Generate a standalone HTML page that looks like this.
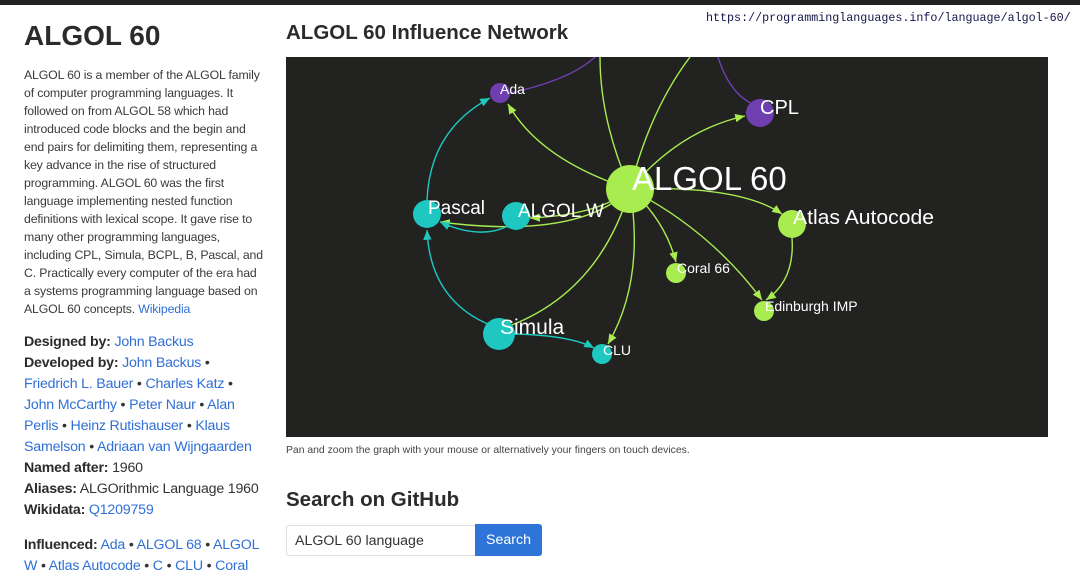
<!DOCTYPE html>
<html><head><meta charset="utf-8"><style>
*{margin:0;padding:0;box-sizing:border-box}
body{width:1080px;height:573px;overflow:hidden;background:#fff;font-family:"Liberation Sans",sans-serif;color:#333;position:relative}
.top{position:absolute;left:0;top:0;width:1080px;height:5px;background:#222220}
.url{position:absolute;left:706px;top:11px;font-family:"Liberation Mono",monospace;font-size:11.7px;color:#14164a;background:#fff;white-space:nowrap}
.left{position:absolute;left:24px;top:18px;width:250px}
h1{font-size:28px;font-weight:bold;color:#2b2b2b;line-height:36px}
.desc{margin-top:12px;font-size:12.3px;line-height:18px;color:#3a3a3a;letter-spacing:-0.15px;width:242px}
a{color:#2f6fd6;text-decoration:none}
.info{margin-top:14px;font-size:14.2px;line-height:21px;color:#333;letter-spacing:-0.2px;white-space:nowrap}
.info b{color:#2b2b2b}
h2{position:absolute;left:286px;top:21px;font-size:20.5px;font-weight:bold;color:#2b2b2b}
.graph{position:absolute;left:286px;top:57px;width:762px;height:380px;background:#222220;overflow:hidden}
.cap{position:absolute;left:286px;top:445px;font-size:10.4px;color:#444}
h3{position:absolute;left:286px;top:488px;font-size:20.5px;font-weight:bold;color:#2b2b2b}
.inp{position:absolute;left:286px;top:525px;width:190px;height:31px;border:1px solid #ddd;border-right:none;border-radius:3px 0 0 3px;font-size:14.2px;padding:7px 8px;color:#333}
.btn{position:absolute;left:475px;top:524px;width:67px;height:32px;background:#2f74d8;border-radius:0 3px 3px 0;color:#fff;font-size:14.2px;text-align:center;line-height:32px}
</style></head><body>
<div class="top"></div>
<div class="url">https://programminglanguages.info/language/algol-60/</div>
<div class="left">
<h1>ALGOL 60</h1>
<div class="desc">ALGOL 60 is a member of the ALGOL family of computer programming languages. It followed on from ALGOL 58 which had introduced code blocks and the begin and end pairs for delimiting them, representing a key advance in the rise of structured programming. ALGOL 60 was the first language implementing nested function definitions with lexical scope. It gave rise to many other programming languages, including CPL, Simula, BCPL, B, Pascal, and C. Practically every computer of the era had a systems programming language based on ALGOL 60 concepts. <a>Wikipedia</a></div>
<div class="info">
<b>Designed by:</b> <a>John Backus</a><br>
<b>Developed by:</b> <a>John Backus</a> •<br>
<a>Friedrich L. Bauer</a> • <a>Charles Katz</a> •<br>
<a>John McCarthy</a> • <a>Peter Naur</a> • <a>Alan</a><br>
<a>Perlis</a> • <a>Heinz Rutishauser</a> • <a>Klaus</a><br>
<a>Samelson</a> • <a>Adriaan van Wijngaarden</a><br>
<b>Named after:</b> 1960<br>
<b>Aliases:</b> ALGOrithmic Language 1960<br>
<b>Wikidata:</b> <a>Q1209759</a>
<div style="height:14px"></div>
<b>Influenced:</b> <a>Ada</a> • <a>ALGOL 68</a> • <a>ALGOL</a><br>
<a>W</a> • <a>Atlas Autocode</a> • <a>C</a> • <a>CLU</a> • <a>Coral</a>
</div>
</div>
<h2>ALGOL 60 Influence Network</h2>
<div class="graph">
<svg width="762" height="380" viewBox="286 57 762 380" xmlns="http://www.w3.org/2000/svg" font-family="Liberation Sans,sans-serif" fill="none">
<defs>
<marker id="ag" markerWidth="8" markerHeight="8" refX="7" refY="4" orient="auto"><path d="M0 1 L7 4 L0 7z" fill="#a8ec50"/></marker>
<marker id="at" markerWidth="8" markerHeight="8" refX="7" refY="4" orient="auto"><path d="M0 1 L7 4 L0 7z" fill="#1ec8c0"/></marker>
</defs>
<g stroke="#a8ec50" stroke-width="1.4">
<path d="M630 189 Q600 120 600 57"/>
<path d="M630 189 Q650 110 690 57"/>
<path d="M630 189 Q540 160 508 104" marker-end="url(#ag)"/>
<path d="M630 189 Q680 130 745 116" marker-end="url(#ag)"/>
<path d="M630 189 Q740 185 782 214" marker-end="url(#ag)"/>
<path d="M630 189 Q600 215 530 218" marker-end="url(#ag)"/>
<path d="M630 189 Q580 240 440 222" marker-end="url(#ag)"/>
<path d="M630 189 Q665 220 676 262" marker-end="url(#ag)"/>
<path d="M630 189 Q710 230 762 300" marker-end="url(#ag)"/>
<path d="M630 189 Q600 290 512 325"/>
<path d="M630 189 Q645 280 608 344" marker-end="url(#ag)"/>
<path d="M792 238 Q795 280 766 300" marker-end="url(#ag)"/>
</g>
<g stroke="#6f3fb0" stroke-width="1.4">
<path d="M510 93 Q570 80 595 57"/>
<path d="M718 57 Q730 95 755 105"/>
</g>
<g stroke="#1ec8c0" stroke-width="1.4">
<path d="M427 200 Q430 130 490 98" marker-end="url(#at)"/>
<path d="M490 325 Q430 300 427 230" marker-end="url(#at)"/>
<path d="M508 226 Q480 240 440 222" marker-end="url(#at)"/>
<path d="M512 334 Q570 335 594 348" marker-end="url(#at)"/>
</g>
<circle cx="500" cy="93" r="10" fill="#6f3fb0"/>
<circle cx="760" cy="113" r="14" fill="#6f3fb0"/>
<circle cx="630" cy="189" r="24" fill="#a8ec50"/>
<circle cx="792" cy="224" r="14" fill="#a8ec50"/>
<circle cx="676" cy="273" r="10" fill="#a8ec50"/>
<circle cx="764" cy="311" r="10" fill="#a8ec50"/>
<circle cx="427" cy="214" r="14" fill="#1ec8c0"/>
<circle cx="516" cy="216" r="14" fill="#1ec8c0"/>
<circle cx="499" cy="334" r="16" fill="#1ec8c0"/>
<circle cx="602" cy="354" r="10" fill="#1ec8c0"/>
<g fill="#fff">
<text x="500" y="94" font-size="14">Ada</text>
<text x="760" y="114" font-size="20">CPL</text>
<text x="632" y="190" font-size="33">ALGOL 60</text>
<text x="793" y="224" font-size="20" textLength="141" lengthAdjust="spacingAndGlyphs">Atlas Autocode</text>
<text x="677" y="273" font-size="14">Coral 66</text>
<text x="765" y="311" font-size="14">Edinburgh IMP</text>
<text x="428" y="214" font-size="19">Pascal</text>
<text x="518" y="217" font-size="19">ALGOL W</text>
<text x="500" y="334" font-size="21">Simula</text>
<text x="603" y="355" font-size="14">CLU</text>
</g>
</svg>
</div>
<div class="cap">Pan and zoom the graph with your mouse or alternatively your fingers on touch devices.</div>
<h3>Search on GitHub</h3>
<div class="inp">ALGOL 60 language</div>
<div class="btn">Search</div>
</body></html>
